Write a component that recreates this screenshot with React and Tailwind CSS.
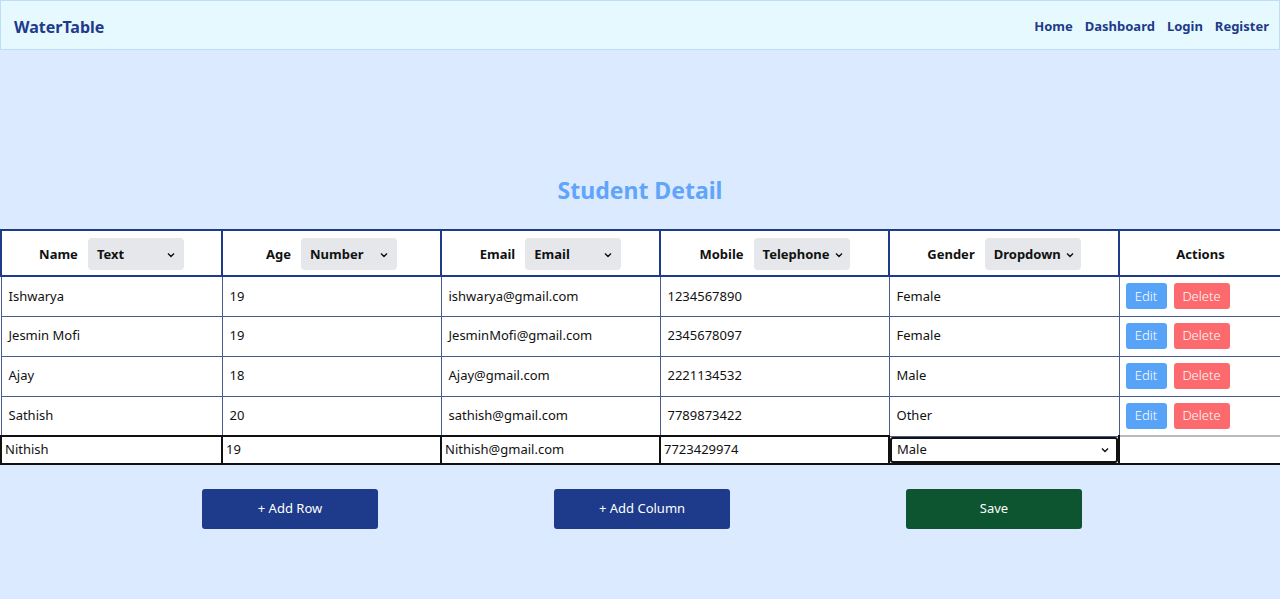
import React from "react";

const rows = [
  ["Ishwarya", "19", "ishwarya@gmail.com", "1234567890", "Female"],
  ["Jesmin Mofi", "19", "JesminMofi@gmail.com", "2345678097", "Female"],
  ["Ajay", "18", "Ajay@gmail.com", "2221134532", "Male"],
  ["Sathish", "20", "sathish@gmail.com", "7789873422", "Other"],
];

const headers = [
  ["Name", "Text"],
  ["Age", "Number"],
  ["Email", "Email"],
  ["Mobile", "Telephone"],
  ["Gender", "Dropdown"],
];

function Chevron() {
  return (
    <svg width="10" height="10" viewBox="0 0 10 10" className="shrink-0">
      <path d="M2 3.5 L5 6.5 L8 3.5" fill="none" stroke="#111" strokeWidth="1.4" />
    </svg>
  );
}

function HeadSelect({ label }) {
  return (
    <div className="flex h-[32px] w-[96px] items-center justify-between gap-[4px] rounded-[4px] bg-[#e5e7eb] pl-[9px] pr-[8px] pt-[2px] text-[13px] font-bold text-[#111]">
      <span className="whitespace-nowrap">{label}</span>
      <Chevron />
    </div>
  );
}

export default function App() {
  const font = { fontFamily: '"Noto Sans", "Open Sans", sans-serif' };
  return (
    <div className="min-h-[599px] bg-[#dbeafe]" style={font}>
      <nav className="flex h-[50px] items-center justify-between border border-[#bfdbfe] bg-[#e6f9ff] pt-[3px] pl-[13px] pr-[10px]">
        <div className="text-[16px] font-bold text-[#1e3a8a]">WaterTable</div>
        <div className="flex gap-[12px] text-[13px] font-bold text-[#1e3a8a]">
          <span>Home</span>
          <span>Dashboard</span>
          <span>Login</span>
          <span>Register</span>
        </div>
      </nav>

      <h1 className="mt-[124px] mb-[23px] text-center text-[23px] font-bold leading-[32px] text-[#60a5fa]">
        Student Detail
      </h1>

      <table className="w-[1280px] table-fixed border-collapse bg-white text-[13px] text-[#111]">
        <colgroup>
          <col className="w-[221px]" />
          <col className="w-[219px]" />
          <col className="w-[219px]" />
          <col className="w-[229px]" />
          <col className="w-[230px]" />
          <col className="w-[162px]" />
        </colgroup>
        <thead>
          <tr className="h-[46px]">
            {headers.map(([name, type]) => (
              <th key={name} className="border-2 border-[#1e3a8a] p-0 pt-[2px]">
                <div className="flex items-center justify-center gap-[10px]">
                  <span className="pt-[2px] font-bold">{name}</span>
                  <HeadSelect label={type} />
                </div>
              </th>
            ))}
            <th className="border-2 border-r-0 border-[#1e3a8a] p-0 pt-[4px] font-bold">Actions</th>
          </tr>
        </thead>
        <tbody>
          {rows.map((r, i) => (
            <tr key={i} className="h-[40px]">
              {r.map((c, j) => (
                <td key={j} className="border border-[#4a5a90] pl-[7px] align-middle">
                  {c}
                </td>
              ))}
              <td className="border border-r-0 border-[#4a5a90] pl-[6px] align-middle">
                <div className="flex gap-[7px]">
                  <button className="h-[26px] w-[41px] rounded-[3px] bg-[#57a3f7] text-[13px] font-light text-white">
                    Edit
                  </button>
                  <button className="h-[26px] w-[56px] rounded-[3px] bg-[#fc6a6d] text-[13px] font-light text-white">
                    Delete
                  </button>
                </div>
              </td>
            </tr>
          ))}
          <tr className="h-[28px]">
            {["Nithish", "19", "Nithish@gmail.com", "7723429974"].map((c, j) => (
              <td key={j} className="border-2 border-[#111] pl-[3px] align-middle">
                {c}
              </td>
            ))}
            <td className="border-2 border-t-0 border-[#111] p-0 align-middle">
              <div className="flex h-[26px] items-center justify-between rounded-[3px] border-2 border-[#111] pl-[5px] pr-[6px]">
                <span>Male</span>
                <Chevron />
              </div>
            </td>
            <td className="border-2 border-r-0 border-[#111] border-t-[#bbb]"></td>
          </tr>
        </tbody>
      </table>

      <div className="mt-[24px] flex justify-center gap-[176px] pl-[4px]">
        <button className="h-[40px] w-[176px] rounded-[3px] bg-[#1e3a8a] text-[13px] text-white">+ Add Row</button>
        <button className="h-[40px] w-[176px] rounded-[3px] bg-[#1e3a8a] text-[13px] text-white">+ Add Column</button>
        <button className="h-[40px] w-[176px] rounded-[3px] bg-[#0d5530] text-[13px] text-white">Save</button>
      </div>
    </div>
  );
}
